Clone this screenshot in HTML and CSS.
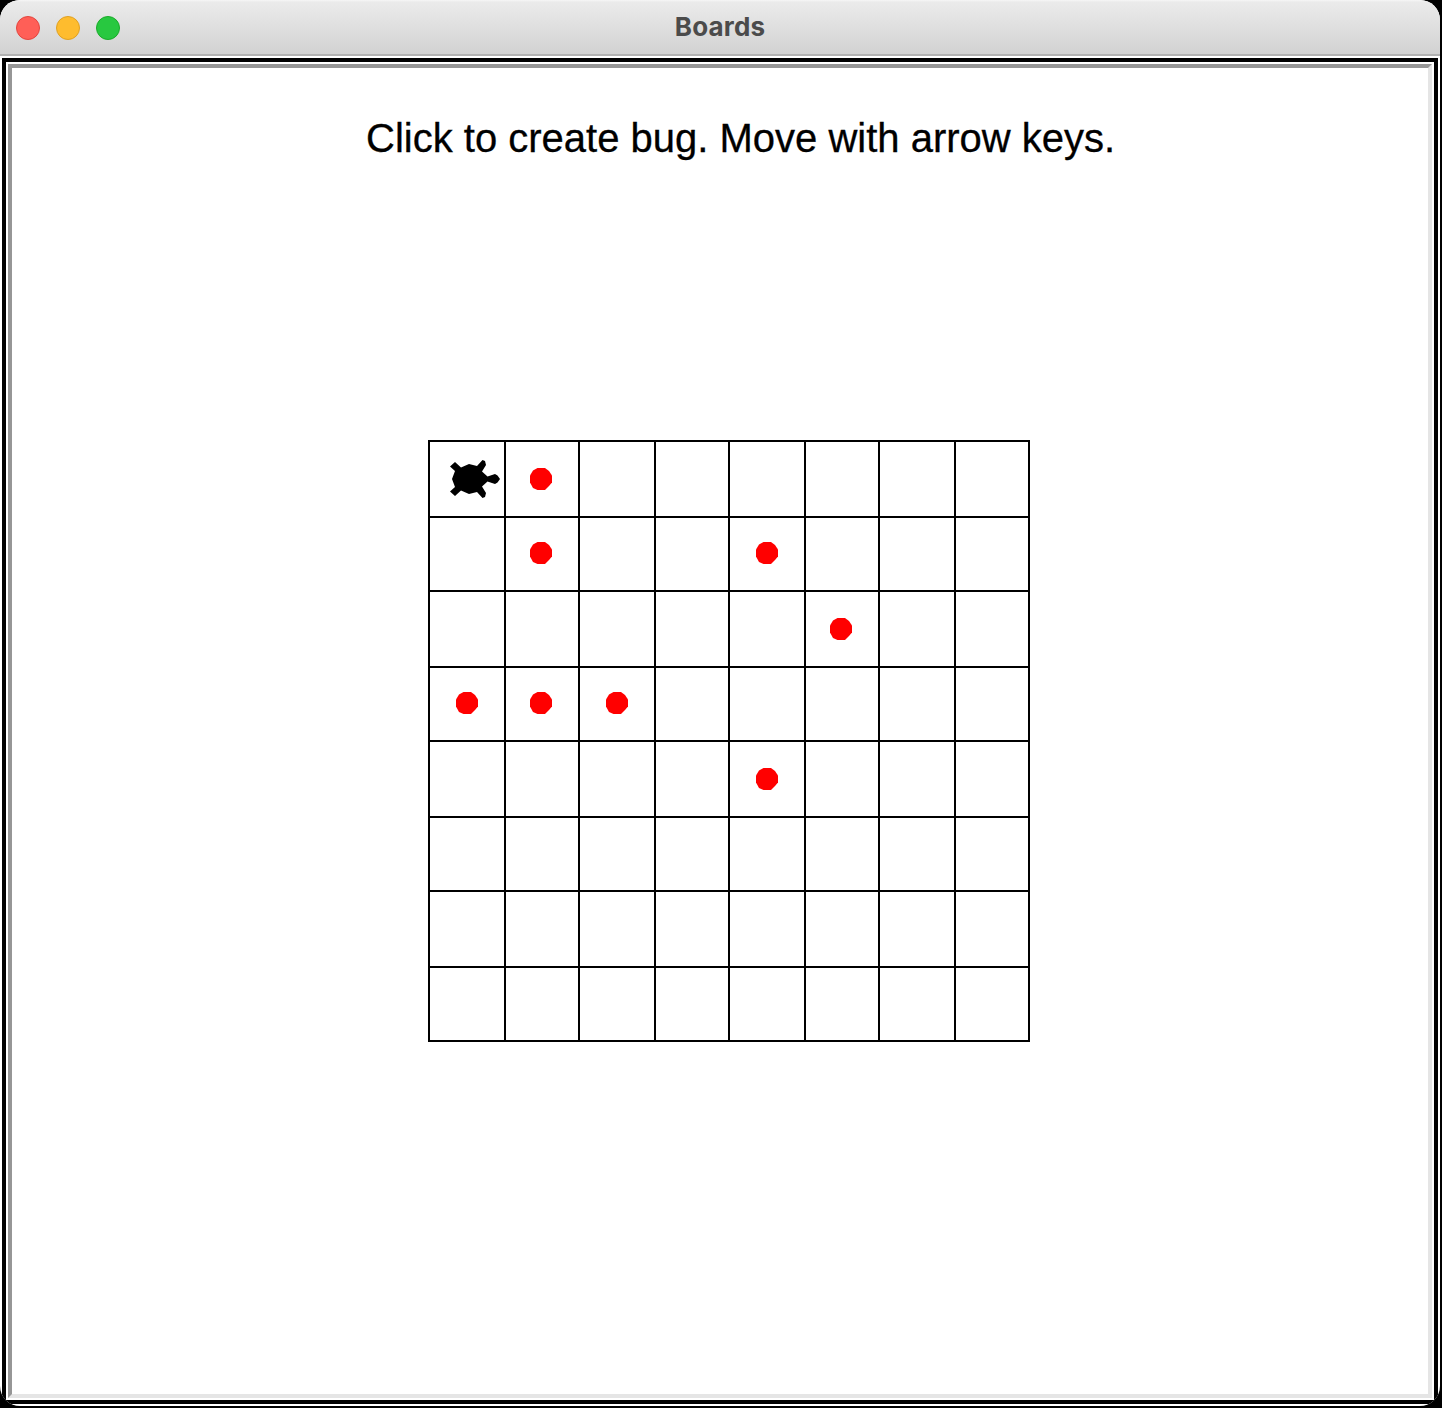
FILE: index.html
```html
<!DOCTYPE html>
<html lang="en">
<head>
<meta charset="utf-8">
<title>Boards</title>
<link rel="stylesheet" href="styles.css">
</head>
<body>
<svg class="defs" width="0" height="0">
  <symbol id="dot" viewBox="0 0 22 22"><path d="M7.500 0H15L19 3L22 7.500V14.500L19 18L15 22H7.500L3 20L0 14.500V7.500L3 2.500Z"/></symbol>
</svg>
<main class="window">
  <header class="titlebar">
    <div class="controls"><span class="control close"></span><span class="control minimize"></span><span class="control zoom"></span></div>
    <h1 class="title">Boards</h1>
  </header>
  <section class="frame">
    <div class="canvas">
      <p class="message">Click to create bug. Move with arrow keys.</p>
      <div class="board">
        <div class="cell"><svg class="bug" width="50" height="38" viewBox="0 0 50 38"><path d="M0 6.500L5 2L11 7.500L19 4L27 6L32.500 0L35 1L36 5L32 11.500L37.500 16.500L45 14L47.500 15.500L50 19L47.500 22.500L45 24L37.500 21.500L32 26.500L36 33L35 37L32.500 38L27 32L19 34L11 30.500L5 36L0 31.500L5 27L2 19L5 11Z"/></svg></div>
        <div class="cell"><svg class="dot"><use href="#dot"/></svg></div><div class="cell"></div><div class="cell"></div><div class="cell"></div><div class="cell"></div><div class="cell"></div><div class="cell"></div>
        <div class="cell low"></div><div class="cell low"><svg class="dot"><use href="#dot"/></svg></div><div class="cell low"></div><div class="cell low"></div><div class="cell low"><svg class="dot"><use href="#dot"/></svg></div><div class="cell low"></div><div class="cell low"></div><div class="cell low"></div>
        <div class="cell"></div><div class="cell"></div><div class="cell"></div><div class="cell"></div><div class="cell"></div><div class="cell"><svg class="dot"><use href="#dot"/></svg></div><div class="cell"></div><div class="cell"></div>
        <div class="cell low"><svg class="dot"><use href="#dot"/></svg></div><div class="cell low"><svg class="dot"><use href="#dot"/></svg></div><div class="cell low"><svg class="dot"><use href="#dot"/></svg></div><div class="cell low"></div><div class="cell low"></div><div class="cell low"></div><div class="cell low"></div><div class="cell low"></div>
        <div class="cell"></div><div class="cell"></div><div class="cell"></div><div class="cell"></div><div class="cell"><svg class="dot"><use href="#dot"/></svg></div><div class="cell"></div><div class="cell"></div><div class="cell"></div>
        <div class="cell"></div><div class="cell"></div><div class="cell"></div><div class="cell"></div><div class="cell"></div><div class="cell"></div><div class="cell"></div><div class="cell"></div>
        <div class="cell"></div><div class="cell"></div><div class="cell"></div><div class="cell"></div><div class="cell"></div><div class="cell"></div><div class="cell"></div><div class="cell"></div>
        <div class="cell"></div><div class="cell"></div><div class="cell"></div><div class="cell"></div><div class="cell"></div><div class="cell"></div><div class="cell"></div><div class="cell"></div>
      </div>
    </div>
  </section>
</main>
</body>
</html>
```
FILE: styles.css
```css
* { box-sizing: border-box; }
html { background: #000; }
body { margin: 0; height: 1408px; overflow: hidden; }
.defs { display: none; }
.window {
  width: 1440px; height: 1406px;
  display: flex; flex-direction: column;
  background: #fff; border-radius: 20px; overflow: hidden;
}
.titlebar {
  flex: none; height: 56px;
  display: grid; grid-template-columns: 1fr auto 1fr; align-items: center;
  padding: 0 16px;
  background: linear-gradient(#f6f6f6 0, #ebebeb 2px, #d2d2d2 54px);
  border-bottom: 2px solid #b2b2b2;
}
.controls { display: flex; gap: 16px; padding-top: 2px; }
.control { width: 24px; height: 24px; border-radius: 50%; border: 1px solid; }
.close { background: #ff5f57; border-color: #e2463f; }
.minimize { background: #febc2e; border-color: #dfa023; }
.zoom { background: #28c840; border-color: #1aab29; }
.title {
  margin: 0; font: 700 26px/54px Inter, sans-serif;
  letter-spacing: 0.15px; color: #4b4b4b;
}
.frame { flex: 1; margin: 2px; border: 4px solid #000; padding: 2px; }
.canvas {
  height: 100%;
  border: 4px solid; border-color: #969696 #e5e5e5 #e5e5e5 #969696;
  display: flex; flex-direction: column; align-items: flex-start;
}
.message {
  margin: 46px 0 0 354px;
  font: 40px/48px "Liberation Sans", Arial, sans-serif; color: #000; white-space: nowrap;
  -webkit-text-stroke: 0.3px #000;
}
.board {
  margin: 278px 0 0 416px;
  display: grid;
  grid-template-columns: repeat(4, 76px 74px);
  grid-template-rows: repeat(4, 76px 74px);
  border: solid #000; border-width: 0 2px 2px 0;
}
.cell {
  border: solid #000; border-width: 2px 0 0 2px;
  display: flex; align-items: center; justify-content: center;
}
.cell:nth-child(even) { padding-right: 2px; }
.low { padding-bottom: 2px; }
.dot { width: 22px; height: 22px; fill: #f00; }
.bug { fill: #000; margin-left: 16px; }
```
